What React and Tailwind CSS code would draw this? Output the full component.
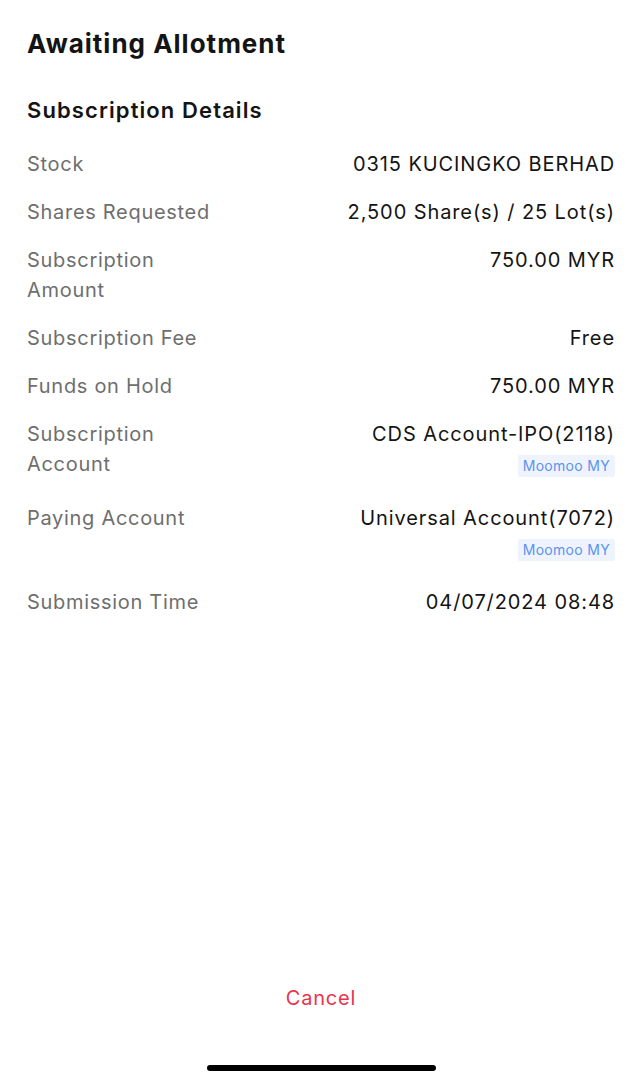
import React from 'react'

const rows = [
    { label: 'Stock', value: '0315 KUCINGKO BERHAD' },
    { label: 'Shares Requested', value: '2,500 Share(s) / 25 Lot(s)' },
    { label: 'Subscription Amount', value: '750.00 MYR' },
    { label: 'Subscription Fee', value: 'Free' },
    { label: 'Funds on Hold', value: '750.00 MYR' },
    { label: 'Subscription Account', value: 'CDS Account-IPO(2118)', tag: 'Moomoo MY' },
    { label: 'Paying Account', value: 'Universal Account(7072)', tag: 'Moomoo MY' },
    { label: 'Submission Time', value: '04/07/2024 08:48' },
]

function App() {
    return (
        <div className="min-h-screen flex flex-col bg-white px-[27px] font-['Inter',sans-serif]">
            <h1 className="pt-[26px] text-[26px] leading-[36px] font-bold text-[#141414] tracking-[1px]">Awaiting Allotment</h1>
            <h2 className="mt-[33px] text-[22px] leading-[30px] font-semibold text-[#141414] tracking-[1.1px]">Subscription Details</h2>

            <div className="mt-[24px] flex flex-col gap-[18px]">
                {rows.map((row, idx) => (
                    <div key={idx} className="flex justify-between text-[20px] leading-[30px]">
                        <div className="w-[200px] text-[#6e6e6e] tracking-[0.7px]">{row.label}</div>
                        <div className="flex flex-col items-end text-[#141414] tracking-[0.9px]">
                            <span>{row.value}</span>
                            {row.tag && (
                                <span className="mt-[6px] mb-[8px] h-[22px] px-[5px] bg-[#eef3fd] text-[#5b93f0] text-[14px] leading-[22px] tracking-[0.3px] rounded-[2px]">
                                    {row.tag}
                                </span>
                            )}
                        </div>
                    </div>
                ))}
            </div>

            <div className="flex-1" />

            <button className="mx-auto text-[20px] leading-[30px] text-[#e8344e] tracking-[0.8px]">Cancel</button>

            <div className="mt-[52px] mb-[13px] mx-auto w-[229px] h-[6px] rounded-full bg-black" />
        </div>
    )
}

export default App
